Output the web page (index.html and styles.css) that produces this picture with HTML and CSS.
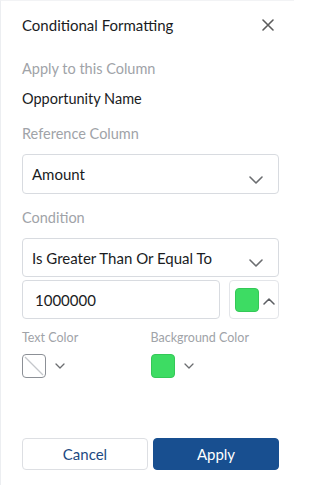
FILE: index.html
```html
<!DOCTYPE html>
<html>
<head>
<meta charset="utf-8">
<link rel="stylesheet" href="styles.css">
</head>
<body>
<div class="panel">
  <div class="header">
    <span class="title">Conditional Formatting</span>
    <svg class="close" width="12" height="12" viewBox="0 0 12 12"><path d="M1 1L11 11M11 1L1 11" stroke="#5c5c5c" stroke-width="1.6" fill="none" stroke-linecap="round"/></svg>
  </div>
  <div class="content">
    <div class="label l1">Apply to this Column</div>
    <div class="value">Opportunity Name</div>
    <div class="label l2">Reference Column</div>
    <div class="select s1">
      <span>Amount</span>
      <svg class="chev" width="14" height="8" viewBox="0 0 14 8"><path d="M1 1L7 7L13 1" stroke="#6b6d70" stroke-width="1.6" fill="none" stroke-linecap="round" stroke-linejoin="round"/></svg>
    </div>
    <div class="label l3">Condition</div>
    <div class="select s2">
      <span>Is Greater Than Or Equal To</span>
      <svg class="chev" width="14" height="8" viewBox="0 0 14 8"><path d="M1 1L7 7L13 1" stroke="#6b6d70" stroke-width="1.6" fill="none" stroke-linecap="round" stroke-linejoin="round"/></svg>
    </div>
    <div class="row">
      <div class="input">1000000</div>
      <div class="colorbtn">
        <span class="green sq"></span>
        <svg class="caret" width="12" height="8" viewBox="0 0 12 8"><path d="M1 7L6 2L11 7" stroke="#5c5f63" stroke-width="1.5" fill="none" stroke-linecap="round" stroke-linejoin="round"/></svg>
      </div>
    </div>
    <div class="colors">
      <div class="col">
        <div class="clabel">Text Color</div>
        <div class="picker">
          <span class="sq empty"><svg width="24" height="24" viewBox="0 0 24 24"><path d="M3 3L21 21" stroke="#c4c7cb" stroke-width="1.3"/></svg></span>
          <svg class="smallchev" width="10" height="6" viewBox="0 0 10 6"><path d="M1 1L5 5L9 1" stroke="#6b6d70" stroke-width="1.3" fill="none" stroke-linecap="round" stroke-linejoin="round"/></svg>
        </div>
      </div>
      <div class="col">
        <div class="clabel">Background Color</div>
        <div class="picker">
          <span class="sq green"></span>
          <svg class="smallchev" width="10" height="6" viewBox="0 0 10 6"><path d="M1 1L5 5L9 1" stroke="#6b6d70" stroke-width="1.3" fill="none" stroke-linecap="round" stroke-linejoin="round"/></svg>
        </div>
      </div>
    </div>
    <div class="footer">
      <button class="btn cancel">Cancel</button>
      <button class="btn apply">Apply</button>
    </div>
  </div>
</div>
</body>
</html>
```

FILE: styles.css
```css
html, body {
  margin: 0;
  padding: 0;
  background: #ffffff;
}
body {
  font-family: "Lato", "Open Sans", sans-serif;
  color: #1a1c1e;
}
.panel {
  width: 294px;
  height: 485px;
  box-sizing: border-box;
  border-left: 1px solid #eceef1;
  border-top: 1px solid #f2f3f5;
  background: #fff;
}
.header {
  height: 48px;
  display: flex;
  align-items: center;
  justify-content: space-between;
  padding: 0 20px 0 21px;
}
.title {
  font-size: 15px;
  color: #1a1c1e;
}
.close {
  display: block;
}
.content {
  padding: 0 15px 0 21px;
}
.label {
  font-size: 14.5px;
  line-height: 20px;
  color: #a0a3a8;
}
.l1 { margin-top: 10px; }
.value {
  font-size: 14.5px;
  line-height: 20px;
  margin-top: 10px;
  color: #1a1c1e;
}
.l2 { margin-top: 15px; }
.select {
  display: flex;
  align-items: center;
  justify-content: space-between;
  box-sizing: border-box;
  border: 1px solid #d8dbe0;
  border-radius: 4px;
  padding: 0 15px 0 9px;
  font-size: 15px;
  color: #1a1c1e;
}
.s1 { height: 40px; margin-top: 10px; }
.s2 { height: 39px; margin-top: 10px; }
.chev {
  display: block;
  margin-top: 11px;
}
.l3 { margin-top: 14px; }
.row {
  display: flex;
  gap: 9px;
  margin-top: 3px;
  height: 39px;
}
.input {
  flex: 1;
  box-sizing: border-box;
  border: 1px solid #d8dbe0;
  border-radius: 4px;
  padding: 0 12px;
  display: flex;
  align-items: center;
  font-size: 15px;
}
.colorbtn {
  width: 50px;
  box-sizing: border-box;
  border: 1px solid #e3e5e9;
  border-radius: 4px;
  display: flex;
  align-items: center;
  padding-left: 5px;
  gap: 4px;
}
.sq {
  display: block;
  width: 24px;
  height: 24px;
  box-sizing: border-box;
  border-radius: 4px;
}
.green {
  background: #3ddc63;
  border: 1px solid #34c857;
}
.empty {
  background: #fff;
  border: 1px solid #8c9096;
  overflow: hidden;
}
.empty svg { display: block; margin: -1px; }
.caret { display: block; margin-top: 2px; }
.colors {
  display: flex;
  margin-top: 11px;
}
.col { width: 129px; }
.clabel {
  font-size: 12.5px;
  line-height: 16px;
  color: #a0a3a8;
}
.picker {
  display: flex;
  align-items: center;
  gap: 9px;
  margin-top: 8px;
}
.smallchev { display: block; }
.footer {
  display: flex;
  gap: 5px;
  margin-top: 60px;
}
.btn {
  flex: 1;
  height: 32px;
  border-radius: 4px;
  font-family: "Lato", "Open Sans", sans-serif;
  font-size: 15px;
  padding: 0;
  box-sizing: border-box;
}
.cancel {
  background: #fff;
  border: 1px solid #dddfe3;
  color: #1d4a82;
}
.apply {
  background: #184f90;
  border: 1px solid #184f90;
  color: #ffffff;
}
```
